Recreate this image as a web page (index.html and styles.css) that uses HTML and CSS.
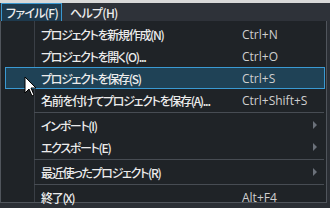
FILE: index.html
```html
<!DOCTYPE html>
<html lang="ja">
<head>
<meta charset="utf-8">
<link rel="stylesheet" href="styles.css">
</head>
<body>
<div class="screen">
  <div class="topstrip"></div>
  <div class="menubar">
    <div class="mb-item active">ファイル(F)</div>
    <div class="mb-item">ヘルプ(H)</div>
  </div>
  <div class="dropdown">
    <div class="row"><span class="label">プロジェクトを新規作成(N)</span><span class="key">Ctrl+N</span></div>
    <div class="row"><span class="label">プロジェクトを開く(O)...</span><span class="key">Ctrl+O</span></div>
    <div class="row hl"><span class="label">プロジェクトを保存(S)</span><span class="key">Ctrl+S</span></div>
    <div class="row"><span class="label">名前を付けてプロジェクトを保存(A)...</span><span class="key">Ctrl+Shift+S</span></div>
    <div class="sep"></div>
    <div class="row"><span class="label">インポート(I)</span><span class="key"></span><span class="arrow"></span></div>
    <div class="row"><span class="label">エクスポート(E)</span><span class="key"></span><span class="arrow"></span></div>
    <div class="sep"></div>
    <div class="row"><span class="label">最近使ったプロジェクト(R)</span><span class="key"></span><span class="arrow"></span></div>
    <div class="sep"></div>
    <div class="row"><span class="label">終了(X)</span><span class="key">Alt+F4</span></div>
  </div>
  <svg class="cursor" width="14" height="22" viewBox="0 0 14 22">
    <path d="M1 1 L1 17 L5 13 L8 20 L10 19 L7 12 L12 12 Z" fill="#ffffff" stroke="#000000" stroke-width="1"/>
  </svg>
</div>
</body>
</html>
```
FILE: styles.css
```css
html, body {
  margin: 0;
  padding: 0;
  background: #1f2327;
}
.screen {
  position: relative;
  width: 330px;
  height: 208px;
  overflow: hidden;
  background: #2b2f35;
  font-family: "Noto Sans CJK JP", "Noto Sans", sans-serif;
  color: #ececec;
  font-size: 12px;
  font-weight: 500;
}
.topstrip {
  height: 3px;
  background: #d9d9d9;
}
.menubar {
  height: 18px;
  display: flex;
  align-items: stretch;
  background: #2e3239;
  padding-left: 1px;
}
.mb-item {
  padding: 0 3px 0 4px;
  line-height: 17px;
  border: 1px solid transparent;
  border-bottom: 0;
  letter-spacing: -0.7px;
  white-space: nowrap;
  font-feature-settings: "palt";
}
.mb-item.active {
  background: #1e3a4e;
  border-color: #3a97cf;
  margin-right: 3px;
}
.dropdown {
  position: relative;
  width: 327px;
  background: #1f2327;
  border-left: 1px solid #50555c;
  border-right: 1px solid #50555c;
  border-bottom: 1px solid #50555c;
  padding-top: 2px;
  box-sizing: border-box;
  height: 182px;
  background-image: linear-gradient(#3a3f46, #3a3f46);
  background-size: 1px 100%;
  background-position: 33px 0;
  background-repeat: no-repeat;
}
.row {
  display: flex;
  align-items: center;
  height: 22px;
  margin: 0 1px 0 4px;
  border: 1px solid transparent;
  box-sizing: border-box;
}
.row.hl {
  background: #1f4256;
  border-color: #3a9ad3;
}
.label {
  width: 201px;
  padding-left: 35px;
  flex: none;
  white-space: nowrap;
  letter-spacing: -1.3px;
  font-feature-settings: "palt";
}
.key {
  flex: 1;
  font-family: "Open Sans", "Noto Sans", sans-serif;
  font-weight: 400;
  color: #cfcfcf;
  font-size: 12px;
}
.arrow {
  width: 0;
  height: 0;
  border-top: 4px solid transparent;
  border-bottom: 4px solid transparent;
  border-left: 4px solid #6b717a;
  margin-right: 7px;
}
.sep {
  height: 1px;
  background: #474c53;
  margin: 1px 2px 1px 33px;
}
.cursor {
  position: absolute;
  left: 24px;
  top: 76px;
}
```
